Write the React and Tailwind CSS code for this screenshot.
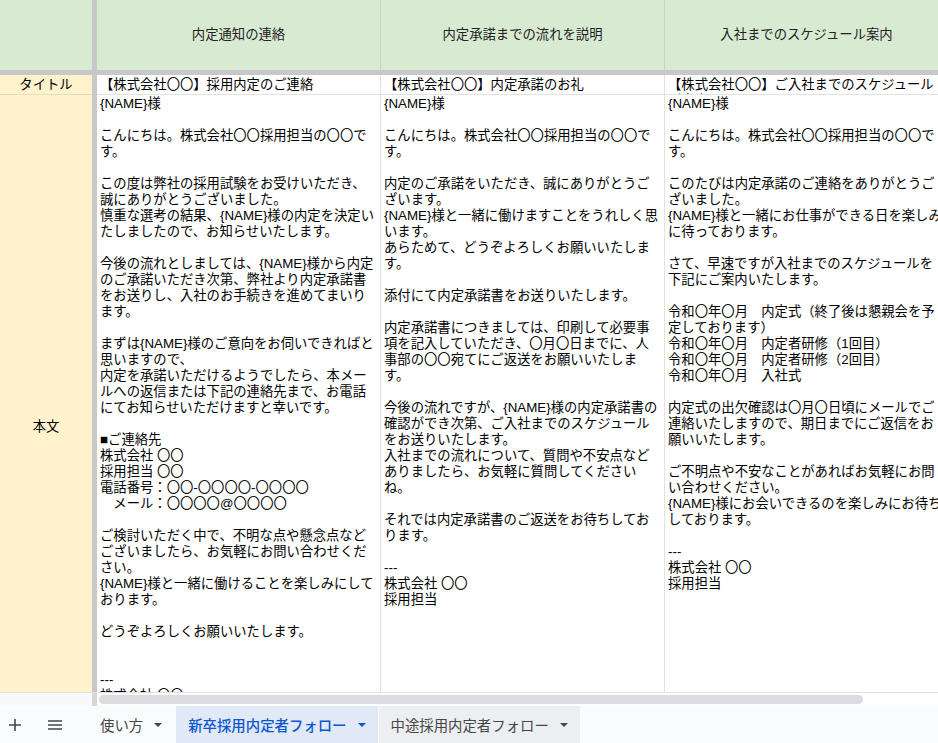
const colB = [
  '{NAME}様',
  '',
  'こんにちは。株式会社〇〇採用担当の〇〇で',
  'す。',
  '',
  'この度は弊社の採用試験をお受けいただき、',
  '誠にありがとうございました。',
  '慎重な選考の結果、{NAME}様の内定を決定い',
  'たしましたので、お知らせいたします。',
  '',
  '今後の流れとしましては、{NAME}様から内定',
  'のご承諾いただき次第、弊社より内定承諾書',
  'をお送りし、入社のお手続きを進めてまいり',
  'ます。',
  '',
  'まずは{NAME}様のご意向をお伺いできればと',
  '思いますので、',
  '内定を承諾いただけるようでしたら、本メー',
  'ルへの返信または下記の連絡先まで、お電話',
  'にてお知らせいただけますと幸いです。',
  '',
  '■ご連絡先',
  '株式会社 〇〇',
  '採用担当 〇〇',
  '電話番号：〇〇-〇〇〇〇-〇〇〇〇',
  '　メール：〇〇〇〇@〇〇〇〇',
  '',
  'ご検討いただく中で、不明な点や懸念点など',
  'ございましたら、お気軽にお問い合わせくだ',
  'さい。',
  '{NAME}様と一緒に働けることを楽しみにして',
  'おります。',
  '',
  'どうぞよろしくお願いいたします。',
  '',
  '',
  '---',
  '株式会社 〇〇',
  '採用担当',
];

const colC = [
  '{NAME}様',
  '',
  'こんにちは。株式会社〇〇採用担当の〇〇で',
  'す。',
  '',
  '内定のご承諾をいただき、誠にありがとうご',
  'ざいます。',
  '{NAME}様と一緒に働けますことをうれしく思',
  'います。',
  'あらためて、どうぞよろしくお願いいたしま',
  'す。',
  '',
  '添付にて内定承諾書をお送りいたします。',
  '',
  '内定承諾書につきましては、印刷して必要事',
  '項を記入していただき、〇月〇日までに、人',
  '事部の〇〇宛てにご返送をお願いいたしま',
  'す。',
  '',
  '今後の流れですが、{NAME}様の内定承諾書の',
  '確認ができ次第、ご入社までのスケジュール',
  'をお送りいたします。',
  '入社までの流れについて、質問や不安点など',
  'ありましたら、お気軽に質問してください',
  'ね。',
  '',
  'それでは内定承諾書のご返送をお待ちしてお',
  'ります。',
  '',
  '---',
  '株式会社 〇〇',
  '採用担当',
];

const colD = [
  '{NAME}様',
  '',
  'こんにちは。株式会社〇〇採用担当の〇〇で',
  'す。',
  '',
  'このたびは内定承諾のご連絡をありがとうご',
  'ざいました。',
  '{NAME}様と一緒にお仕事ができる日を楽しみ',
  'に待っております。',
  '',
  'さて、早速ですが入社までのスケジュールを',
  '下記にご案内いたします。',
  '',
  '令和〇年〇月　内定式（終了後は懇親会を予',
  '定しております）',
  '令和〇年〇月　内定者研修（1回目）',
  '令和〇年〇月　内定者研修（2回目）',
  '令和〇年〇月　入社式',
  '',
  '内定式の出欠確認は〇月〇日頃にメールでご',
  '連絡いたしますので、期日までにご返信をお',
  '願いいたします。',
  '',
  'ご不明点や不安なことがあればお気軽にお問',
  'い合わせください。',
  '{NAME}様にお会いできるのを楽しみにお待ち',
  'しております。',
  '',
  '---',
  '株式会社 〇〇',
  '採用担当',
];

const columns = [
  { head: '内定通知の連絡', title: ['【株式会社〇〇】採用内定のご連絡'], body: colB },
  { head: '内定承諾までの流れを説明', title: ['【株式会社〇〇】内定承諾のお礼'], body: colC },
  { head: '入社までのスケジュール案内', title: ['【株式会社〇〇】ご入社までのスケジュール', 'ご案内'], body: colD },
];

function Freeze() {
  return <div className="w-[5px] shrink-0 bg-[#c8c8c8]" />;
}

function Caret({ className }) {
  return (
    <svg width="8" height="4" viewBox="0 0 8 4" className={className}>
      <path d="M0 0h8L4 4z" fill="currentColor" />
    </svg>
  );
}

export default function App() {
  return (
    <div className="w-[938px] h-[743px] overflow-hidden flex flex-col bg-white text-black font-['Liberation_Sans','Noto_Sans_CJK_JP',sans-serif]">
      {/* Grid */}
      <div className="h-[692px] shrink-0 overflow-hidden flex flex-col text-[13.33px]">
        {/* Header row */}
        <div className="h-[70px] shrink-0 flex">
          <div className="w-[92px] shrink-0 bg-[#d9ead3]" />
          <Freeze />
          {columns.map((c) => (
            <div
              key={c.head}
              className="w-[284px] shrink-0 bg-[#d9ead3] border-r border-[#c6d8c0] flex items-center justify-center text-[#222]"
            >
              {c.head}
            </div>
          ))}
        </div>
        <div className="h-[5px] shrink-0 bg-[#c8c8c8]" />

        {/* Title row */}
        <div className="h-[20px] shrink-0 flex">
          <div className="w-[92px] shrink-0 bg-[#fff2cc] border-b border-[#e4dcc2] flex items-start justify-center leading-[16px] pt-[2px]">
            タイトル
          </div>
          <Freeze />
          {columns.map((c) => (
            <div
              key={c.head}
              className="w-[284px] shrink-0 border-r border-b border-[#e2e2e2] overflow-hidden leading-[16px] pt-[2px] px-[3px]"
            >
              {c.title.map((t) => (
                <div key={t} className="h-[16px] whitespace-pre">{t}</div>
              ))}
            </div>
          ))}
        </div>

        {/* Body row */}
        <div className="h-[664px] shrink-0 flex">
          <div className="w-[92px] shrink-0 bg-[#fff2cc] flex items-center justify-center">本文</div>
          <Freeze />
          {columns.map((c) => (
            <div key={c.head} className="w-[284px] shrink-0 border-r border-[#e2e2e2] pt-[1px] px-[3px] overflow-hidden">
              {c.body.map((line, i) => (
                <div key={i} className="h-[16px] leading-[16px] whitespace-pre">
                  {line}
                </div>
              ))}
            </div>
          ))}
        </div>
      </div>

      {/* Horizontal scrollbar */}
      <div className="h-[14px] shrink-0 flex border-t border-[#e1e1e1]">
        <div className="w-[92px] shrink-0 bg-[#f8f9fa]" />
        <div className="w-[5px] shrink-0 bg-[#d6d6d6]" />
        <div className="flex-1 bg-white pt-[2px] pl-[2px]">
          <div className="w-[764px] h-[9px] rounded-full bg-[#dadce0]" />
        </div>
      </div>

      {/* Sheet tabs */}
      <div className="h-[37px] shrink-0 flex items-stretch bg-[#f9fbfd] text-[14.4px] text-[#444746] font-['Noto_Sans_CJK_JP','Liberation_Sans',sans-serif]">
        <div className="w-[30px] flex items-center justify-center">
          <svg width="12" height="12" viewBox="0 0 12 12">
            <path d="M6 0v12M0 6h12" stroke="#444746" strokeWidth="1.6" />
          </svg>
        </div>
        <div className="w-[50px] flex items-center justify-center">
          <svg width="14" height="10" viewBox="0 0 14 10">
            <path d="M0 1h14M0 5h14M0 9h14" stroke="#444746" strokeWidth="1.6" />
          </svg>
        </div>
        <div className="w-[8px]" />
        <div className="flex items-center pl-[12px] pr-[14px] gap-[11px]">
          <span>使い方</span>
          <Caret className="text-[#444746]" />
        </div>
        <div className="flex items-center pl-[12px] pr-[12px] gap-[11px] bg-[#e1e9f7] text-[#0b57d0] font-medium">
          <span>新卒採用内定者フォロー</span>
          <Caret className="text-[#0b57d0]" />
        </div>
        <div className="flex items-center pl-[12px] pr-[12px] gap-[11px] bg-[#eceef1] ml-[1px]">
          <span>中途採用内定者フォロー</span>
          <Caret className="text-[#444746]" />
        </div>
      </div>
    </div>
  );
}
